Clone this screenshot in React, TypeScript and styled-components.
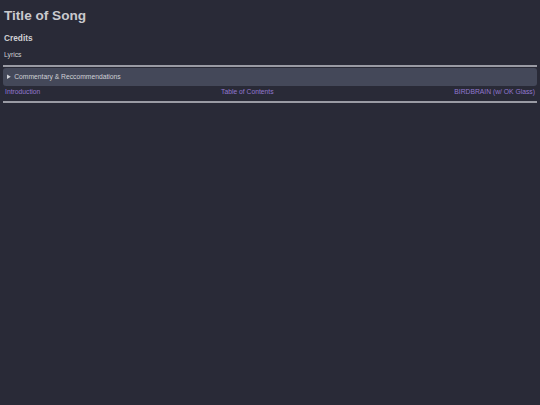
import React from "react";
import styled, { createGlobalStyle } from "styled-components";

const GlobalStyle = createGlobalStyle`
	html, body {
		margin: 0;
		background-color: #292a37;
		height: 100%;
	}
	body {
		font-family: "Liberation Sans", Arial, sans-serif;
		color: #d4d4d8;
	}
`;

const Page = styled.div`
	padding: 4px 3px;
	display: flex;
	flex-direction: column;
`;

const Title = styled.h1`
	font-size: 13.6px;
	font-weight: bold;
	color: #c9c9ce;
	margin: 4px 1px 0;
	line-height: 16px;
`;

const Credits = styled.h3`
	font-size: 8.3px;
	font-weight: bold;
	color: #d0d0d4;
	margin: 9px 1px 0;
	line-height: 10px;
`;

const Lyrics = styled.p`
	font-size: 6.8px;
	color: #d0d0d4;
	margin: 7px 1px 0;
	line-height: 9px;
`;

const Rule = styled.hr<{ top: number }>`
	border: none;
	height: 2px;
	background-color: #9a9ba4;
	margin: ${({ top }) => top}px 0 0;
	width: 100%;
`;

const Details = styled.details`
	margin-top: 1px;
	background-color: #444859;
	border-radius: 3px;
	color: #cfd0d6;
	font-size: 6.75px;
`;

const Summary = styled.summary`
	padding: 5px 4px;
	line-height: 8px;
	cursor: pointer;
	list-style-position: inside;
`;

const NavRow = styled.nav`
	display: flex;
	justify-content: space-between;
	padding: 1px 2px 0;
	font-size: 6.75px;
	line-height: 9px;
`;

const NavLink = styled.a`
	color: #9278d0;
	text-decoration: none;
	cursor: pointer;
`;

const App: React.FunctionComponent = () => {
	return (
		<>
			<GlobalStyle />
			<Page>
				<Title>Title of Song</Title>
				<Credits>Credits</Credits>
				<Lyrics>Lyrics</Lyrics>
				<Rule top={6} />
				<Details>
					<Summary>Commentary &amp; Reccommendations</Summary>
				</Details>
				<NavRow>
					<NavLink>Introduction</NavLink>
					<NavLink>Table of Contents</NavLink>
					<NavLink>BIRDBRAIN (w/ OK Glass)</NavLink>
				</NavRow>
				<Rule top={5} />
			</Page>
		</>
	);
};

export default App;
